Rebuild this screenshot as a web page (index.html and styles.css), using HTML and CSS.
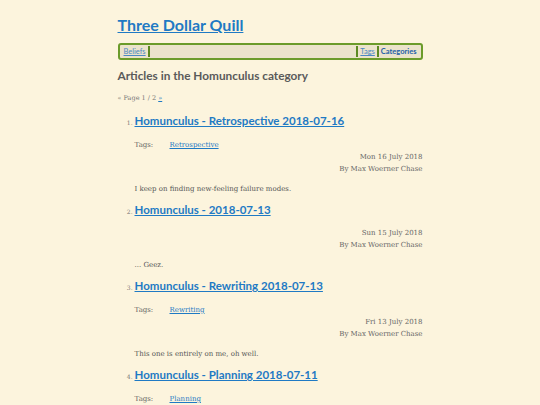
FILE: index.html
```html
<!DOCTYPE html>
<html>
<head>
<meta charset="utf-8">
<link rel="stylesheet" href="styles.css">
</head>
<body>
<div class="page">
  <h1 class="site-title"><a href="#">Three Dollar Quill</a></h1>
  <nav class="nav">
    <a class="nav-link" href="#">Beliefs</a>
    <span class="sep"></span>
    <span class="spacer"></span>
    <span class="sep"></span>
    <a class="nav-link" href="#">Tags</a>
    <span class="sep"></span>
    <a class="nav-link current" href="#">Categories</a>
  </nav>
  <h2 class="cat-title">Articles in the Homunculus category</h2>
  <p class="pager">« Page 1 / 2 <a href="#">»</a></p>
  <ol class="articles">
    <li>
      <h3 class="a-title"><a href="#">Homunculus - Retrospective 2018-07-16</a></h3>
      <div class="tags"><span class="tags-label">Tags:</span><a href="#">Retrospective</a></div>
      <div class="meta"><div>Mon 16 July 2018</div><div>By Max Woerner Chase</div></div>
      <p class="summary">I keep on finding new-feeling failure modes.</p>
    </li>
    <li>
      <h3 class="a-title"><a href="#">Homunculus - 2018-07-13</a></h3>
      <div class="meta no-tags"><div>Sun 15 July 2018</div><div>By Max Woerner Chase</div></div>
      <p class="summary">... Geez.</p>
    </li>
    <li>
      <h3 class="a-title"><a href="#">Homunculus - Rewriting 2018-07-13</a></h3>
      <div class="tags"><span class="tags-label">Tags:</span><a href="#">Rewriting</a></div>
      <div class="meta"><div>Fri 13 July 2018</div><div>By Max Woerner Chase</div></div>
      <p class="summary">This one is entirely on me, oh well.</p>
    </li>
    <li>
      <h3 class="a-title"><a href="#">Homunculus - Planning 2018-07-11</a></h3>
      <div class="tags"><span class="tags-label">Tags:</span><a href="#">Planning</a></div>
      <div class="meta"><div>Wed 11 July 2018</div><div>By Max Woerner Chase</div></div>
      <p class="summary">Planning.</p>
    </li>
  </ol>
</div>
</body>
</html>
```
FILE: styles.css
```css
html, body { margin: 0; padding: 0; }
body {
  background: #fcf4dd;
  font-family: "DejaVu Serif", serif;
  color: #555;
}
.page {
  width: 305px;
  margin: 0 auto;
  padding-top: 13px;
}
a { color: #1f7ac4; }
.site-title {
  margin: 0;
  font-family: Lato, sans-serif;
  font-weight: 700;
  font-size: 16px;
  line-height: 24px;
}
.site-title a { color: #1f7ac4; }
.nav {
  display: flex;
  align-items: center;
  margin-top: 6px;
  height: 13px;
  border: 2px solid #6b9b2a;
  border-radius: 3px;
  background: #ebe3cb;
  padding: 0 2px;
  font-family: Lato, sans-serif;
  font-size: 7.5px;
}
.nav-link { color: #4a88c4; padding: 0 2px; }
.nav-link.current { color: #1d5fa8; font-weight: 700; text-decoration: none; }
.sep { width: 2px; height: 11px; background: #5d8a22; }
.spacer { flex: 1; }
.cat-title {
  margin: 8px 0 0;
  font-family: Lato, sans-serif;
  font-weight: 700;
  font-size: 11.8px;
  line-height: 16px;
  color: #5a5a5a;
}
.pager {
  margin: 9px 0 0;
  font-size: 6.5px;
  line-height: 10px;
  color: #777;
}
.articles {
  margin: 8px 0 0;
  padding-left: 17px;
  font-size: 6px;
  color: #777;
}
.a-title {
  margin: 0;
  font-family: Lato, sans-serif;
  font-weight: 700;
  font-size: 11.5px;
  line-height: 20px;
}
.tags {
  margin-top: 8px;
  font-size: 7px;
  line-height: 12px;
  color: #666;
}
.tags-label { display: inline-block; width: 35px; }
.meta {
  text-align: right;
  font-size: 7px;
  line-height: 12px;
  color: #666;
}
.meta.no-tags { margin-top: 7px; }
.summary {
  margin: 8px 0 5px;
  font-size: 7px;
  line-height: 12px;
  color: #555;
}
```
